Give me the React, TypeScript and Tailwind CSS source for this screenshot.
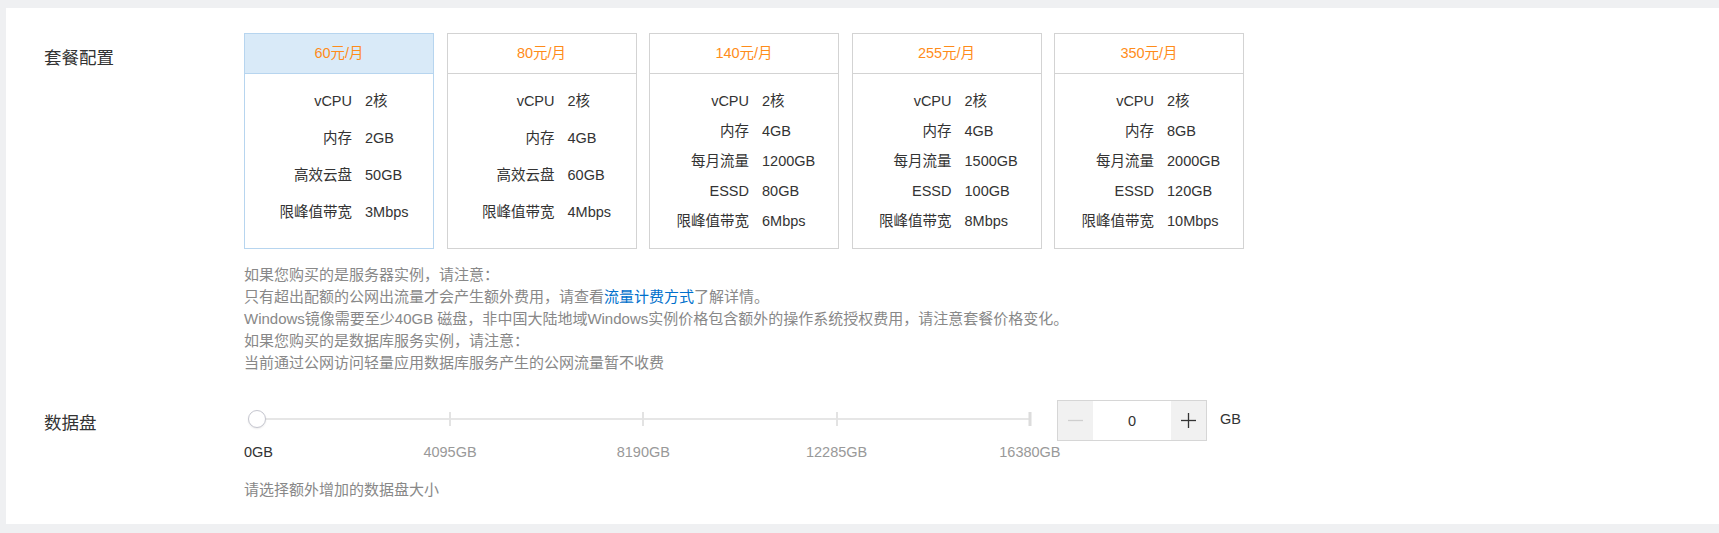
import { Fragment } from "react";

type Plan = {
  price: string;
  active?: boolean;
  items: [string, string][];
};

const plans: Plan[] = [
  {
    price: "60元/月",
    active: true,
    items: [
      ["vCPU", "2核"],
      ["内存", "2GB"],
      ["高效云盘", "50GB"],
      ["限峰值带宽", "3Mbps"],
    ],
  },
  {
    price: "80元/月",
    items: [
      ["vCPU", "2核"],
      ["内存", "4GB"],
      ["高效云盘", "60GB"],
      ["限峰值带宽", "4Mbps"],
    ],
  },
  {
    price: "140元/月",
    items: [
      ["vCPU", "2核"],
      ["内存", "4GB"],
      ["每月流量", "1200GB"],
      ["ESSD", "80GB"],
      ["限峰值带宽", "6Mbps"],
    ],
  },
  {
    price: "255元/月",
    items: [
      ["vCPU", "2核"],
      ["内存", "4GB"],
      ["每月流量", "1500GB"],
      ["ESSD", "100GB"],
      ["限峰值带宽", "8Mbps"],
    ],
  },
  {
    price: "350元/月",
    items: [
      ["vCPU", "2核"],
      ["内存", "8GB"],
      ["每月流量", "2000GB"],
      ["ESSD", "120GB"],
      ["限峰值带宽", "10Mbps"],
    ],
  },
];

const marks = ["0GB", "4095GB", "8190GB", "12285GB", "16380GB"];
const TRACK_START = 12.7;
const TRACK_STEP = 193.3;

function PlanCard({ plan }: { plan: Plan }) {
  const long = plan.items.length > 4;
  return (
    <div
      className={
        plan.active
          ? "w-[190px] h-[216px] border border-[#b7d5ef] bg-white"
          : "w-[190px] h-[216px] border border-[#d3d3d3] bg-white"
      }
    >
      <div
        className={
          plan.active
            ? "h-[40px] border-b border-[#b7d5ef] bg-[#d9eaf8] flex items-center justify-center text-[14.5px] text-[#ff8c1a]"
            : "h-[40px] border-b border-[#d3d3d3] flex items-center justify-center text-[14.5px] text-[#ff8c1a]"
        }
      >
        {plan.price}
      </div>
      <div className={long ? "pt-[13px]" : "pt-[9px]"}>
        {plan.items.map(([label, value]) => (
          <div
            key={label}
            className={
              long
                ? "h-[30px] flex items-center text-[14.5px] text-[#333]"
                : "h-[37px] flex items-center text-[14.5px] text-[#333]"
            }
          >
            <span className={long ? "w-[99px] text-right" : "w-[107px] text-right"}>
              {label}
            </span>
            <span className="ml-[13px]">{value}</span>
          </div>
        ))}
      </div>
    </div>
  );
}

function DiskSlider() {
  return (
    <div className="relative w-[800px] h-[64px]">
      <div
        className="absolute top-[18px] h-[2px] bg-[#e6e6e6]"
        style={{ left: TRACK_START, width: TRACK_STEP * 4 }}
      />
      {marks.map((m, i) => {
        const left = TRACK_START + TRACK_STEP * i;
        return (
          <Fragment key={m}>
            {i > 0 && (
              <div
                className={
                  i === marks.length - 1
                    ? "absolute top-[12px] h-[14px] w-[3px] -translate-x-1/2 bg-[#dcdcdc]"
                    : "absolute top-[12px] h-[14px] w-[2px] -translate-x-1/2 bg-[#e3e3e3]"
                }
                style={{ left }}
              />
            )}
            {i === 0 ? (
              <span className="absolute left-0 top-[42px] leading-[20px] text-[14.5px] text-[#333]">
                {m}
              </span>
            ) : (
              <span
                className="absolute top-[42px] leading-[20px] text-[14.5px] text-[#999] -translate-x-1/2 whitespace-nowrap"
                style={{ left }}
              >
                {m}
              </span>
            )}
          </Fragment>
        );
      })}
      <div
        className="absolute top-[10px] h-[18px] w-[18px] -translate-x-1/2 rounded-full border border-[#c5c6cf] bg-white shadow-[0_1px_2px_rgba(0,0,0,0.08)]"
        style={{ left: TRACK_START }}
      />
    </div>
  );
}

function NumberBox() {
  return (
    <div className="flex items-start">
      <div className="flex h-[41px] w-[150px] border border-[#d6d6d6]">
        <button className="flex w-[35px] items-center justify-center bg-[#f1f1f1]">
          <svg width="15" height="15" viewBox="0 0 15 15">
            <line x1="0" y1="7.5" x2="15" y2="7.5" stroke="#cfcfcf" strokeWidth="1.3" />
          </svg>
        </button>
        <div className="flex flex-1 items-center justify-center bg-white text-[14.5px] text-[#333] pt-[2px]">
          0
        </div>
        <button className="flex w-[35px] items-center justify-center bg-[#f1f1f1]">
          <svg width="15" height="15" viewBox="0 0 15 15">
            <line x1="0" y1="7.5" x2="15" y2="7.5" stroke="#333" strokeWidth="1.3" />
            <line x1="7.5" y1="0" x2="7.5" y2="15" stroke="#333" strokeWidth="1.3" />
          </svg>
        </button>
      </div>
      <span className="ml-[13px] mt-[8px] leading-[22px] text-[14.5px] text-[#333]">GB</span>
    </div>
  );
}

export default function App() {
  return (
    <div
      className="min-h-screen bg-[#eff0f2] pt-[8px] pb-[9px] pl-[6px]"
      style={{ fontFamily: '"Liberation Sans", "Noto Sans CJK SC", sans-serif' }}
    >
      <div className="bg-white pl-[38px] pt-[25px] pb-[23px]">
        {/* 套餐配置 */}
        <div className="flex">
          <div className="w-[200px] pt-[13px] leading-[24px] text-[17.5px] text-[#333]">
            套餐配置
          </div>
          <div>
            <div className="flex gap-[12.5px]">
              {plans.map((p) => (
                <PlanCard key={p.price} plan={p} />
              ))}
            </div>
            <div className="mt-[15px] text-[15px] leading-[22px] text-[#888]">
              <p>如果您购买的是服务器实例，请注意：</p>
              <p>
                只有超出配额的公网出流量才会产生额外费用，请查看
                <a className="text-[#0070cc]">流量计费方式</a>
                了解详情。
              </p>
              <p>
                Windows镜像需要至少40GB 磁盘，非中国大陆地域Windows实例价格包含额外的操作系统授权费用，请注意套餐价格变化。
              </p>
              <p>如果您购买的是数据库服务实例，请注意：</p>
              <p>当前通过公网访问轻量应用数据库服务产生的公网流量暂不收费</p>
            </div>
          </div>
        </div>

        {/* 数据盘 */}
        <div className="mt-[26px] flex">
          <div className="w-[200px] pt-[11px] leading-[24px] text-[17.5px] text-[#333]">
            数据盘
          </div>
          <div>
            <div className="flex items-start">
              <DiskSlider />
              <div className="ml-[13px]">
                <NumberBox />
              </div>
            </div>
            <p className="mt-[15px] text-[15px] leading-[22px] text-[#888]">
              请选择额外增加的数据盘大小
            </p>
          </div>
        </div>
      </div>
    </div>
  );
}
